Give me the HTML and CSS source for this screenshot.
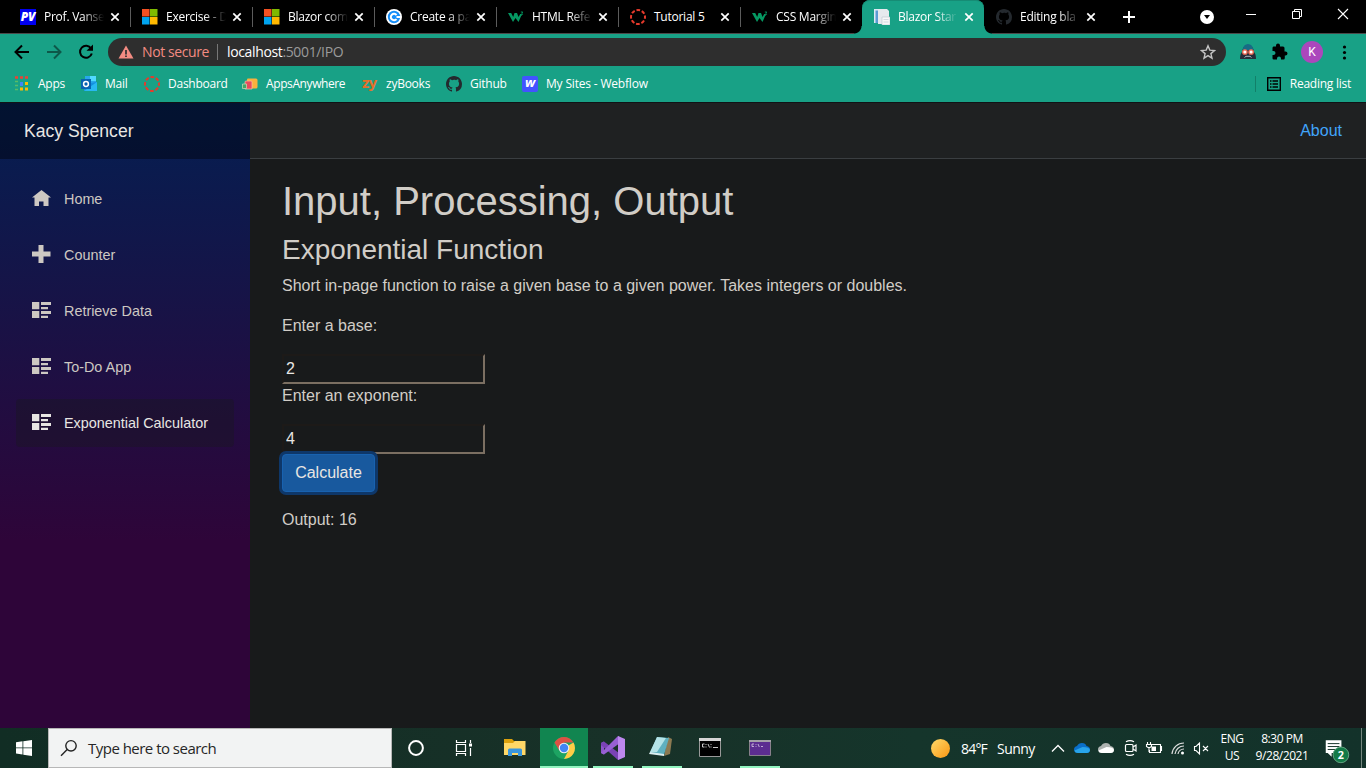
FILE: index.html
```html
<!DOCTYPE html>
<html lang="en">
<head>
<meta charset="utf-8">
<title>Blazor Starter</title>
<link rel="stylesheet" href="styles.css">
</head>
<body>
<svg class="defs" width="0" height="0">
  <symbol id="ms" viewBox="0 0 16 16"><path fill="#f25022" d="M0 0h7.500v7.500H0z"/><path fill="#7fba00" d="M8 0h7.500v7.500H8z"/><path fill="#00a4ef" d="M0 8h7.500v7.500H0z"/><path fill="#ffb900" d="M8 8h7.500v7.500H8z"/></symbol>
  <symbol id="ring" viewBox="0 0 16 16"><circle cx="8" cy="8" r="7" fill="none" stroke="#e63a2c" stroke-width="2" stroke-dasharray="3.700 1.800" stroke-dashoffset="1.800"/></symbol>
  <symbol id="w3" viewBox="0 0 16 16"><path d="M0 4h3.200l2 4 1.300-4h2.500l1.500 4 1.700-3h1.800l-3.500 8-3-4-2.500 4z" fill="#059862"/><path d="M12.800 3h2l-1 1.200q1.700.8-.1 2l-1-.3" fill="none" stroke="#059862" stroke-width=".9"/></symbol>
  <symbol id="gh" viewBox="0 0 16 16"><path fill="#24292e" d="M8 0C3.580 0 0 3.580 0 8c0 3.540 2.290 6.530 5.470 7.590.4.070.55-.17.55-.38 0-.19-.01-.82-.01-1.490-2.010.37-2.530-.49-2.690-.94-.09-.23-.48-.94-.82-1.130-.28-.15-.68-.52-.01-.53.63-.01 1.080.58 1.230.82.72 1.210 1.870.87 2.330.66.07-.52.28-.87.51-1.070-1.780-.2-3.640-.89-3.640-3.950 0-.87.31-1.590.82-2.150-.08-.2-.36-1.020.08-2.120 0 0 .67-.21 2.200.82A7.600 7.600 0 0 1 8 3.860c.68 0 1.360.09 2 .27 1.530-1.040 2.200-.82 2.200-.82.44 1.100.16 1.920.08 2.120.51.56.82 1.270.82 2.150 0 3.070-1.870 3.750-3.650 3.950.29.25.54.73.54 1.480 0 1.070-.01 1.930-.01 2.200 0 .21.15.46.55.38A8 8 0 0 0 16 8c0-4.420-3.580-8-8-8z"/></symbol>
  <symbol id="x" viewBox="0 0 16 16"><path d="M4.300 4.300l7.400 7.400M11.700 4.300l-7.400 7.400" stroke="#fff" stroke-width="1.700"/></symbol>
  <symbol id="list" viewBox="0 0 19 16"><path fill="currentColor" d="M0 0h7.300v7.300H0zM0 9h7.300v7H0zM9 0h10v3H9zM9 5h7v2.300H9zM9 9h10v3H9zM9 13.800h7V16H9z"/></symbol>
</svg>

<header class="tabs">
  <div class="tab"><span class="fav pv">PV</span><span class="title">Prof. Vanse</span><svg class="close"><use href="#x"/></svg></div>
  <div class="tab"><svg class="fav"><use href="#ms"/></svg><span class="title">Exercise - D</span><svg class="close"><use href="#x"/></svg></div>
  <div class="tab"><svg class="fav"><use href="#ms"/></svg><span class="title">Blazor com</span><svg class="close"><use href="#x"/></svg></div>
  <div class="tab"><svg class="fav" viewBox="0 0 16 16"><circle cx="8" cy="8" r="8" fill="#fff"/><circle cx="8" cy="8" r="6.200" fill="#168ef8"/><path d="M10.500 6A3.200 3.200 0 1 0 10.500 10" fill="none" stroke="#fff" stroke-width="2"/><path d="M10.500 7h4.500v2h-4.500z" fill="#fff"/></svg><span class="title">Create a pa</span><svg class="close"><use href="#x"/></svg></div>
  <div class="tab"><svg class="fav"><use href="#w3"/></svg><span class="title">HTML Refe</span><svg class="close"><use href="#x"/></svg></div>
  <div class="tab"><svg class="fav"><use href="#ring"/></svg><span class="title">Tutorial 5</span><svg class="close"><use href="#x"/></svg></div>
  <div class="tab last"><svg class="fav"><use href="#w3"/></svg><span class="title">CSS Margin</span><svg class="close"><use href="#x"/></svg></div>
  <div class="tab active"><svg class="fav" viewBox="0 0 16 16"><path d="M0 0h4v14H0z" fill="#dbe9f5"/><path d="M1.500 1.500H4V14H1.500z" fill="#5b9ad3"/><path d="M4 0h9l2 2v13H4z" fill="#e6e9ee"/><path d="M8 8h8v8H8z" fill="#f7f7f8" stroke="#b8c4cf" stroke-width=".6"/><path d="M9.500 10.500h5M9.500 13h5" stroke="#d3d8e0"/></svg><span class="title">Blazor Star</span><svg class="close"><use href="#x"/></svg></div>
  <div class="tab last"><svg class="fav"><use href="#gh"/></svg><span class="title">Editing bla</span><svg class="close"><use href="#x"/></svg></div>
  <svg class="plus" viewBox="0 0 46 33"><path d="M17 17h12M23 11v12" stroke="#fff" stroke-width="2"/></svg>
  <div class="controls">
    <svg viewBox="0 0 46 33"><circle cx="25" cy="17" r="7" fill="#fff"/><path d="M22 15h6l-3 4z"/></svg>
    <svg viewBox="0 0 46 33"><path d="M18 14.500h10" stroke="#fff"/></svg>
    <svg viewBox="0 0 46 33"><path d="M18.500 11.500h7v7h-7zM20.500 11.500v-2h7v7h-2" fill="none" stroke="#fff"/></svg>
    <svg viewBox="0 0 46 33"><path d="M18 9l10 10M28 9L18 19" stroke="#fff" stroke-width="1.100"/></svg>
  </div>
</header>

<div class="toolbar">
  <svg class="tb" viewBox="0 0 32 32"><path d="M23 16H10M16 9.500L9.500 16l6.500 6.500" fill="none" stroke="#000" stroke-width="2"/></svg>
  <svg class="tb dim" viewBox="0 0 32 32"><path d="M9 16h13M16 9.500l6.500 6.500-6.500 6.500" fill="none" stroke="#000" stroke-width="2"/></svg>
  <svg class="tb" viewBox="0 0 32 32"><path d="M21.100 12.500A6 6 0 1 0 21.800 17.500" fill="none" stroke="#000" stroke-width="2"/><path d="M16.500 14.800h6.500V8.500z"/></svg>
  <div class="omnibox">
    <svg class="warn" viewBox="0 0 16 14"><path d="M8 .5L15.500 13.500H.5z" fill="#f28b82"/><path d="M8 5v4.500M8 10.500v1.600" stroke="#2e2e2e" stroke-width="1.700"/></svg>
    <span class="insecure">Not secure</span><span class="bar"></span><span class="url"><b>localhost</b>:5001/IPO</span>
    <svg class="star" viewBox="0 0 16 16"><path d="M8 1.800l1.800 4.300 4.700.4-3.600 3.100 1.100 4.600L8 11.700l-4 2.500 1.100-4.600-3.600-3.100 4.700-.4z" fill="none" stroke="#c4c4c4" stroke-width="1.400"/></svg>
  </div>
  <div class="ext">
    <svg viewBox="0 0 32 32"><path d="M8 23q0-5 2-7 1-7 6-7t6 7q2 2 2 7z" fill="#242c39"/><path d="M10.500 14q1-6 5.500-6t5.500 6z" fill="#176b85"/><circle cx="12.900" cy="16" r="2.200" fill="#fff" stroke="#ee6a52" stroke-width="1.300"/><circle cx="19.100" cy="16" r="2.200" fill="#fff" stroke="#ee6a52" stroke-width="1.300"/><path d="M12.500 21.500l1.500-1.200h4l1.500 1.200" fill="none" stroke="#a8b7bd"/></svg>
    <svg viewBox="0 0 32 32"><path d="M21.500 15.500h-1V12q0-1.500-1.500-1.500h-3v-1q0-2-2-2t-2 2v1H9.500Q8.500 10.500 8.500 12v3h1q2 0 2 2t-2 2h-1v3.200q0 1.300 1.300 1.300H13v-1q0-2 2-2t2 2v1h2.500q1.300 0 1.300-1.500v-2.500h.7q2 0 2-2t-2-2z"/></svg>
    <span class="avatar">K</span>
    <svg viewBox="0 0 32 32"><circle cx="16.500" cy="11" r="1.600"/><circle cx="16.500" cy="16.500" r="1.600"/><circle cx="16.500" cy="22" r="1.600"/></svg>
  </div>
</div>

<nav class="bookmarks">
  <a class="b-apps"><svg viewBox="0 0 16 16"><path d="M1 1.500h3M6 1.500h3M11 1.500h3" stroke="#ea4335" stroke-width="2.500"/><path d="M1 5.500h3M1 9.500h3M1 13.500h3" stroke="#58bd67" stroke-width="1.500"/><path d="M6 6h3v4H6z" fill="#4285f4"/><path d="M11 7.500h3M6 13h3M11 13h3" stroke="#fbbc05" stroke-width="3"/></svg>Apps</a>
  <a class="b-mail"><svg viewBox="0 0 16 16"><path d="M4 0h11v8H4z" fill="#28a8ea"/><path d="M9 0h6v5H9z" fill="#50d9ff"/><path d="M3 8l13-2v9H3z" fill="#1490df"/><path d="M3 15l13-9v9z" fill="#28b8f1"/><path d="M0 3h10v10H0z" fill="#0864b1"/><circle cx="5" cy="8" r="2.400" fill="none" stroke="#fff" stroke-width="1.500"/></svg>Mail</a>
  <a class="b-dash"><svg><use href="#ring"/></svg>Dashboard</a>
  <a class="b-any"><svg viewBox="0 0 16 16"><path d="M5 3.500q0-1 1-1h8q1.500 0 1.500 1.500v7q0 1.500-1.500 1.500H5z" fill="#f9b13d"/><path d="M3 6q0-1 1-1h5q1 0 1 1v7H3z" fill="#e84b5c" stroke="#f6c4a4" stroke-width=".7"/><path d="M.5 8h4v4.500h-4z" fill="#45a568" stroke="#c9e2b8" stroke-width=".7"/></svg>AppsAnywhere</a>
  <a class="b-zy"><span class="zy">zy</span>zyBooks</a>
  <a class="b-gh"><svg><use href="#gh"/></svg>Github</a>
  <a class="b-wf"><span class="wf">w</span>My Sites - Webflow</a>
  <a class="reading"><svg viewBox="0 0 16 16"><path d="M1.700 1.700h12.600v12.600H1.700z" fill="none" stroke="#000" stroke-width="1.400"/><path d="M4 5h1.500M6.500 5H12M4 8h1.500M6.500 8H12M4 11h1.500M6.500 11H12" stroke="#000" stroke-width="1.400"/></svg>Reading list</a>
</nav>

<div class="page">
  <aside class="sidebar">
    <div class="brand">Kacy Spencer</div>
    <ul class="nav">
      <li><svg viewBox="0 0 19 19"><path fill="currentColor" d="M9.500 1L0 8.500h2.500V17H7v-4.500h4.500V17h5V8.500H19z"/></svg>Home</li>
      <li><svg viewBox="0 0 19 19"><path fill="currentColor" d="M6.500 0h5v6.500H18.500v5h-7V18h-5v-6.500H0v-5h6.500z"/></svg>Counter</li>
      <li><svg class="lst"><use href="#list"/></svg>Retrieve Data</li>
      <li><svg class="lst"><use href="#list"/></svg>To-Do App</li>
      <li class="on"><svg class="lst"><use href="#list"/></svg>Exponential Calculator</li>
    </ul>
  </aside>
  <main class="main">
    <div class="top">About</div>
    <div class="content">
      <h1>Input, Processing, Output</h1>
      <h3>Exponential Function</h3>
      <p>Short in-page function to raise a given base to a given power. Takes integers or doubles.</p>
      <p>Enter a base:</p>
      <input value="2">
      <p>Enter an exponent:</p>
      <input value="4">
      <button>Calculate</button>
      <p>Output: 16</p>
    </div>
  </main>
</div>

<footer class="taskbar">
  <svg class="cell" viewBox="0 0 48 40"><path fill="#fff" d="M16 14.300l6.500-1v6.200H16zM23.300 13.200L32 12v7.500h-8.700zM16 20.300h6.500v6.300l-6.500-1zM23.300 20.300H32V28l-8.700-1.300z"/></svg>
  <div class="search"><svg viewBox="0 0 18 18"><circle cx="11" cy="6.800" r="5.200" fill="none" stroke="#222" stroke-width="1.400"/><path d="M7.200 10.600L1 16.800" stroke="#222" stroke-width="1.400"/></svg>Type here to search</div>
  <svg class="cell" viewBox="0 0 48 40"><circle cx="24" cy="20" r="6.900" fill="none" stroke="#fff" stroke-width="2"/></svg>
  <svg class="cell" viewBox="0 0 48 40"><path d="M16.500 12v2.500h9V12M16.500 28v-2.500h9V28M16.500 16.500h9v7h-9zM30.500 12v3M30.500 20v8" fill="none" stroke="#fff" stroke-width="1.200"/><path d="M29 15.500h3v3h-3z" fill="#fff"/></svg>
  <svg class="cell wide" viewBox="0 0 52 40"><path d="M16 11h8l2 2h11v13H16z" fill="#dca10d"/><path d="M16 15h9l2-2h10.500v14H16z" fill="#ffd867"/><path d="M20 28v-6q0-1.500 1.500-1.500h11q1.500 0 1.500 1.500v6h-4v-3h-6v3z" fill="#3a96dd"/></svg>
  <svg class="cell chrome" viewBox="0 0 48 40"><circle cx="24" cy="20" r="11" fill="#1da462"/><path d="M24 20L33.500 14.500A11 11 0 0 1 24 31l4.500-8.500z" fill="#ffcd46"/><path d="M14.500 14.500A11 11 0 0 1 33.500 14.500H24l-5 7.500z" fill="#dd5144"/><circle cx="24" cy="20" r="5.300" fill="#f1f1f1"/><circle cx="24" cy="20" r="4.200" fill="#4285f4"/></svg>
  <svg class="cell app vs" viewBox="0 0 48 40"><path d="M12 15l3-1.500v13L12 25z" fill="#8e55ca"/><path d="M12 15l3-1.500L35 29l-6 3L12 17z" fill="#7a42b5"/><path d="M12 25L29 8l6 4-20 14.500z" fill="#9860d4"/><path d="M29 8l7 3v18l-7 3z" fill="#bd87ee"/></svg>
  <svg class="cell app" viewBox="0 0 48 40"><path d="M30 9l4 2-2 15-6 2z" fill="#8c7a52"/><path d="M19 9l12 1-5 17-14-2z" fill="#5fb0bf"/><path d="M19 9l9 1-9 14-7 0z" fill="#b4e3e7"/><path d="M12 24l14 2v2l-15-2z" fill="#dbeef0"/></svg>
  <svg class="cell" viewBox="0 0 48 40"><path d="M13.500 10.500h21v18h-21z" stroke="#999"/><path d="M13 10h22v3H13z" fill="#d6d6d6"/><path d="M18.500 16h-2v3h2M20 16v1M20 18.500v1M22 16l1.500 3.500M25 16v1M25 18.500v1M27 19.500h5" fill="none" stroke="#ddd" stroke-width=".9"/></svg>
  <svg class="cell app last-app" viewBox="0 0 48 40"><path d="M13.500 12.500h21v15h-21z" fill="#5c2d91" stroke="#88808c"/><path d="M13 12h22v2H13z" fill="#a5a1a9"/><path d="M18 16h-2v2.500h2M20 16v.8M20 18v.8M22 16l1.300 3M25 18.500h2" fill="none" stroke="#d7c9e5" stroke-width=".8"/></svg>
  <div class="tray">
    <i class="sun"></i><span class="temp">84°F</span><span class="sunny">Sunny</span>
    <svg class="t" viewBox="0 0 24 40"><path d="M6 23.500l6-6 6 6" fill="none" stroke="#fff" stroke-width="1.300"/></svg>
    <svg class="t" viewBox="0 0 24 40"><path d="M7.500 25Q4 24.500 4 21.500q0-3 3-3.500 1.500-3 5-3 3.500 0 4.500 3 3.500.5 3.500 3.700 0 3.300-3.500 3.300z" fill="#0a6fc9"/><path d="M8 25q-3 0-3.500-2.500l8-3.500q7 0 7.500 3-.5 3-3.500 3z" fill="#28a4ea"/></svg>
    <svg class="t" viewBox="0 0 24 40"><path d="M7.500 25Q4 24.500 4 21.500q0-3 3-3.500 1.500-3 5-3 3.500 0 4.500 3 3.500.5 3.500 3.700 0 3.300-3.500 3.300z" fill="#aeb3b1"/><path d="M8 25q-3 0-3.500-2.500l8-3.500q7 0 7.500 3-.5 3-3.500 3z" fill="#fff"/></svg>
    <svg class="t" viewBox="0 0 24 40"><rect x="7.500" y="16.500" width="7.500" height="7" rx="1" fill="none" stroke="#fff" stroke-width="1.200"/><path d="M15 19l3-2v6l-3-2M8 13.800q4-2.500 8 0M8 26.200q4 2.500 8 0" fill="none" stroke="#fff" stroke-width="1.200"/></svg>
    <svg class="t" viewBox="0 0 24 40"><path d="M9.500 16.500h9v8h-11V22M18.500 18.500h1v4h-1M5.500 14v2.500M8.500 14v2.500M4.500 16.500h5v2l-1.500 1h-2l-1.500-1zM7 19v5" fill="none" stroke="#fff" stroke-width="1.100"/><path d="M9.500 18.500H14V23H9.500z" fill="#fff"/></svg>
    <svg class="t" viewBox="0 0 24 40"><path d="M6 26A12 12 0 0 1 18 15M9 26a9 9 0 0 1 9-8M12 26a6 6 0 0 1 6-5" fill="none" stroke="#ddd" stroke-width="1.200"/><circle cx="16.500" cy="25" r="1.500" fill="#fff"/></svg>
    <svg class="t" viewBox="0 0 24 40"><path d="M4.500 18.500H6L9.500 15v11L6 22.500H4.500zM13 18l5 5M18 18l-5 5" fill="none" stroke="#fff" stroke-width="1.100"/></svg>
    <div class="lang">ENG<br>US</div>
    <div class="time">8:30 PM<br>9/28/2021</div>
    <svg class="note" viewBox="0 0 48 40"><path d="M12 12h16v13H18v4l-4-4h-2z" fill="#fff"/><path d="M14 15.500h12M14 18.500h12M14 21.500h8" stroke="#15342a"/><circle cx="27.500" cy="27" r="8" fill="#137a47" stroke="#63a481"/><text x="27.500" y="31.200" text-anchor="middle" class="count">2</text></svg>
  </div>
</footer>
</body>
</html>
```
FILE: styles.css
```css
* { box-sizing: border-box; }
body { margin: 0; width: 1366px; height: 768px; overflow: hidden; background: #181a1b; font-family: "Open Sans", sans-serif; font-size: 12px; color: #fff; display: flex; flex-direction: column; }
.defs { position: absolute; }
svg { display: block; flex: none; }

.tabs { height: 34px; background: #000; border-bottom: 1px solid #4a4a4a; display: flex; padding-left: 8px; flex: none; }
.tab { width: 122px; height: 34px; padding: 0 0 0 12px; display: flex; align-items: center; position: relative; flex: none; }
.tab:not(.last):not(.active)::after { content: ""; width: 1px; height: 20px; background: #5c5c5c; position: absolute; right: -1px; top: 7px; }
.fav { width: 16px; height: 16px; margin-right: 8px; flex: none; }
.pv { background: #0000f0; font: italic 800 12px/16px "Open Sans", sans-serif; text-align: center; letter-spacing: -.3px; }
.title { width: 60px; white-space: nowrap; letter-spacing: -.25px; line-height: 20px; -webkit-mask-image: linear-gradient(90deg, #000 38px, transparent 60px); mask-image: linear-gradient(90deg, #000 38px, transparent 60px); }
.tab:nth-child(6) .title { -webkit-mask: none; mask: none; }
.close { width: 16px; height: 16px; margin-left: 3px; }
.active { background: #18a186; border-radius: 8px 8px 0 0; box-shadow: inset 0 1px #168c75; }
.active::before, .active::after { content: ""; position: absolute; bottom: 0; width: 8px; height: 8px; }
.active::before { left: -8px; background: radial-gradient(circle at 0 0, #000 7px, #18a186 8px); }
.active::after { right: -8px; background: radial-gradient(circle at 100% 0, #000 7px, #18a186 8px); }
.plus { width: 46px; height: 33px; }
.controls { margin-left: auto; display: flex; }
.controls svg { width: 46px; height: 33px; }

.toolbar { height: 36px; flex: none; background: #18a186; display: flex; align-items: center; padding-left: 6px; }
.tb { width: 32px; height: 32px; }
.dim { opacity: .45; }
.omnibox { width: 1118px; height: 28px; margin-left: 6px; background: #2e2e2e; border-radius: 14px; display: flex; align-items: center; padding: 0 10px; font-size: 14px; line-height: 18px; flex: none; }
.omnibox span:not(.bar) { margin-top: -1px; }
.warn { width: 16px; height: 14px; margin-right: 8px; }
.insecure { color: #f28b82; width: 75px; letter-spacing: -.4px; white-space: nowrap; }
.bar { width: 1px; height: 16px; background: #777; margin-right: 9px; }
.url { color: #9b9b9b; letter-spacing: -.36px; }
.url b { color: #fff; font-weight: 400; }
.star { width: 16px; height: 16px; margin-left: auto; }
.ext { display: flex; align-items: center; margin-left: 6px; }
.ext svg { width: 32px; height: 32px; }
.avatar { width: 22px; height: 22px; margin: 0 5px; border-radius: 50%; background: #ab47bc; text-align: center; line-height: 22px; font-size: 12px; font-family: Roboto, sans-serif; }

.bookmarks { height: 32px; flex: none; background: #18a186; display: flex; align-items: center; padding: 0 15px 5px 14px; letter-spacing: -.25px; line-height: 16px; }
.bookmarks a { display: flex; align-items: center; gap: 8px; white-space: nowrap; flex: none; }
.bookmarks svg { width: 16px; height: 16px; }
.b-apps { width: 67px; } .b-mail { width: 63px; } .b-dash { width: 98px; } .b-any { width: 120px; letter-spacing: -.4px; } .b-zy { width: 84px; } .b-gh { width: 76px; } .bookmarks .b-wf { letter-spacing: -.18px; }
.zy { width: 16px; color: #e5702a; font: bold 15px/16px "Open Sans", sans-serif; letter-spacing: -.7px; margin-top: -4px; }
.wf { width: 16px; height: 16px; background: #4353ff; border-radius: 2px; font: italic bold 13px/13px "Open Sans", sans-serif; text-align: center; }
.reading { margin-left: auto; border-left: 1px solid #128069; height: 16px; padding-left: 10px; }

.page { flex: 1; display: flex; border-top: 1px solid #101316; font-family: "Liberation Sans", Arial, sans-serif; min-height: 0; }
.sidebar { width: 250px; background: linear-gradient(180deg, #041f52 0%, #2e0539 70%); }
.brand { height: 56px; background: rgba(0,0,0,.4); padding-left: 24px; line-height: 56px; font-size: 17.600px; color: #e8e6e3; }
.nav { list-style: none; margin: 0; padding: 16px 16px 0; display: flex; flex-direction: column; gap: 8px; font-size: 14.400px; color: #cdc8c2; }
.nav li { height: 48px; border-radius: 4px; display: flex; align-items: center; padding-left: 15.600px; }
.nav svg { width: 19px; height: 19px; margin: 0 13.400px 2px 0; }
.nav .lst { height: 16px; }
.nav .on { background: rgba(24,26,27,.35); color: #e8e6e3; }
.main { flex: 1; background: #181a1b; }
.top { height: 56px; background: #1f2122; border-bottom: 1px solid #3a3e41; text-align: right; padding-right: 24px; line-height: 55px; font-size: 16px; color: #41a5fb; }
.content { padding: 17.600px 32px 0; color: #d1cdc7; font-size: 16px; line-height: 24px; }
h1 { font-size: 40px; font-weight: 400; line-height: 48px; margin: 0 0 8px; }
h3 { font-size: 28px; font-weight: 400; line-height: 33.600px; margin: 0 0 8px; }
p { margin: 0 0 16px; }
input { display: block; width: 203px; height: 30px; font: 16px/24px "Liberation Sans", Arial, sans-serif; padding: 1px 2px; color: #e8e6e3; background: #181a1b; border: 2px solid; border-color: #1d1a18 #7b6f62 #7b6f62 #1d1a18; }
button { display: block; width: 93px; height: 38px; padding: 0; margin-bottom: 16px; font: 16px/24px "Liberation Sans", Arial, sans-serif; color: #e8e6e3; background: #18599e; border: 1px solid #1862b0; border-radius: 4px; box-shadow: 0 0 0 3px #0e3769; position: relative; }

.taskbar { height: 40px; flex: none; display: flex; background: linear-gradient(90deg, #112d24, #183128 45%, #15352b 67%, #13322a); }
.cell { width: 48px; height: 40px; }
.search { width: 344px; background: #f2f3f3; border: 1px solid #b7b7b7; display: flex; align-items: center; padding-left: 11px; gap: 10px; color: #262626; font-size: 15px; letter-spacing: -.52px; flex: none; }
.search svg { width: 18px; height: 18px; }
.wide { width: 52px; }
.chrome { background: linear-gradient(#118550 0 38px, #92f5c0 38px); }
.app { background: linear-gradient(90deg, #92f5c0, #92f5c0) 50% 100% / 40px 2px no-repeat; }
.vs { margin-left: 1px; }
.app + .app { margin-left: 1px; }
.last-app { margin-left: 2px; }
.tray { margin-left: auto; display: flex; align-items: center; }
.sun { width: 19px; height: 19px; border-radius: 50%; background: linear-gradient(135deg, #ffda6b, #fb9612); }
.temp { margin-left: 11px; width: 36px; font-size: 14px; letter-spacing: -.8px; }
.sunny { width: 50px; font-size: 14px; letter-spacing: -.55px; }
.t { width: 24px; height: 40px; }
.t:nth-of-type(1) { margin-left: -1px; }
.lang, .time { text-align: center; line-height: 17px; letter-spacing: -.45px; white-space: nowrap; margin-top: -2px; }
.lang { width: 36px; } .time { width: 64px; }
.note { width: 48px; height: 40px; border-right: 1px solid #75877f; margin-right: 4px; }
.count { fill: #fff; font: bold 11px "Open Sans", sans-serif; }
```
